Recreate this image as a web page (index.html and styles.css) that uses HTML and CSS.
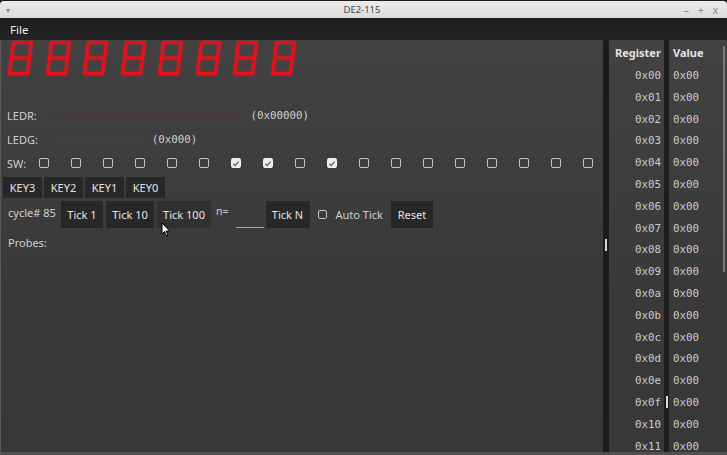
FILE: index.html
```html
<!DOCTYPE html>
<html>
<head>
<meta charset="utf-8">
<link rel="stylesheet" href="styles.css">
</head>
<body>
<div class="window">
  <div class="titlebar">
    <span class="tb-menu">▾</span>
    <span class="tb-title">DE2-115</span>
    <span class="tb-btns"><span>–</span><span>+</span><span>x</span></span>
  </div>
  <div class="menubar"><span class="menu-item">File</span></div>
  <div class="main">
    <div class="left">
      <div class="segs" id="segs"></div>
      <div class="row">
        <span class="label lbl-ledr">LEDR:</span>
        <span class="leds leds-red" id="ledr"></span>
        <span class="mono hexr">(0x00000)</span>
      </div>
      <div class="row">
        <span class="label lbl-ledg">LEDG:</span>
        <span class="leds leds-green" id="ledg"></span>
        <span class="mono hexg">(0x000)</span>
      </div>
      <div class="row sw-row">
        <span class="label lbl-sw">SW:</span>
        <div class="switches" id="switches"></div>
      </div>
      <div class="keys">
        <button class="btn key">KEY3</button>
        <button class="btn key">KEY2</button>
        <button class="btn key">KEY1</button>
        <button class="btn key">KEY0</button>
      </div>
      <div class="ticks">
        <span class="label cycle">cycle# 85</span>
        <button class="btn tick t1">Tick 1</button>
        <button class="btn tick t10">Tick 10</button>
        <button class="btn tick t100 hover">Tick 100</button>
        <span class="label neq">n=</span>
        <span class="nbox"></span>
        <button class="btn tick tn">Tick N</button>
        <span class="cb auto-cb"></span>
        <span class="label auto">Auto Tick</span>
        <button class="btn tick reset">Reset</button>
      </div>
      <div class="row probes"><span class="label">Probes:</span></div>
      <svg class="cursor" width="10" height="15" viewBox="0 0 10 15"><path d="M1 1 L1 12 L3.5 9.5 L5.5 14 L7 13.3 L5.1 9 L8.6 9 Z" fill="#fff" stroke="#000" stroke-width="1"/></svg>
    </div>
    <div class="splitter"><span class="handle"></span></div>
    <div class="regs">
      <div class="col col-reg" id="colreg"><div class="hdr">Register</div></div>
      <div class="col-div"><span class="handle2"></span></div>
      <div class="col col-val" id="colval"><div class="hdr">Value</div></div>
      <div class="scroll"><span class="sbar"></span></div>
    </div>
  </div>
</div>
<script>
  var segs = document.getElementById('segs');
  for (var i = 0; i < 8; i++) {
    segs.insertAdjacentHTML('beforeend',
      '<svg class="digit" width="27" height="36" viewBox="0 0 27 36">' +
      '<path d="M6.5 2.5 L24.5 2.5 L20.5 33.5 L2.5 33.5 Z M4.5 18 L22.5 18" fill="none" stroke="#e4101c" stroke-width="3" stroke-linejoin="round"/></svg>');
  }
  var r = document.getElementById('ledr');
  for (var i = 0; i < 18; i++) r.insertAdjacentHTML('beforeend', '<i></i>');
  var g = document.getElementById('ledg');
  for (var i = 0; i < 9; i++) g.insertAdjacentHTML('beforeend', '<i></i>');
  var sw = document.getElementById('switches');
  var on = {6:1, 7:1, 9:1};
  for (var i = 0; i < 18; i++) {
    sw.insertAdjacentHTML('beforeend', '<span class="swc"><span class="cb' + (on[i] ? ' checked' : '') + '">' +
      (on[i] ? '<svg width="9" height="9" viewBox="0 0 9 9"><path d="M1.5 4.8 L3.6 6.8 L7.6 2.4" fill="none" stroke="#6a6a6a" stroke-width="1.5"/></svg>' : '') +
      '</span></span>');
  }
  var cr = document.getElementById('colreg'), cv = document.getElementById('colval');
  for (var i = 0; i < 18; i++) {
    var h = i.toString(16); if (h.length < 2) h = '0' + h;
    cr.insertAdjacentHTML('beforeend', '<div class="cell">0x' + h + '</div>');
    cv.insertAdjacentHTML('beforeend', '<div class="cell">0x00</div>');
  }
</script>
</body>
</html>
```

FILE: styles.css
```css
html, body {
  margin: 0;
  padding: 0;
  background: #2a2a2a;
}
body {
  width: 727px;
  height: 455px;
  overflow: hidden;
  font-family: "Noto Sans", "Open Sans", sans-serif;
}
.window {
  width: 727px;
  height: 455px;
  display: flex;
  flex-direction: column;
  background: #1c1c1c;
}
.titlebar {
  height: 17px;
  margin-top: 1px;
  background: linear-gradient(#ececec, #dcdcdc);
  border-radius: 4px 4px 0 0;
  display: flex;
  align-items: center;
  position: relative;
  color: #5a5a5a;
  font-size: 9px;
}
.tb-menu {
  margin-left: 6px;
  font-size: 8px;
  color: #888;
}
.tb-title {
  flex: 1;
  text-align: center;
  color: #4a4a4a;
  font-size: 9.5px;
  margin-left: 30px;
}
.tb-btns {
  display: flex;
  gap: 9px;
  margin-right: 9px;
  color: #888;
  font-size: 10px;
}
.menubar {
  height: 22px;
  background: linear-gradient(#1e1e1e, #242424);
  display: flex;
  align-items: center;
}
.menu-item {
  margin-left: 10px;
  color: #ececec;
  font-size: 11.5px;
}
.main {
  flex: 1;
  display: flex;
  background: linear-gradient(#424242, #393939 60%, #383838);
  border-left: 1px solid #5a5a5a;
  border-bottom: 3px solid #505050;
  overflow: hidden;
}
.left {
  width: 602px;
  position: relative;
}
.label {
  color: #cfcfcf;
  font-size: 11px;
  white-space: nowrap;
}
.mono {
  font-family: "DejaVu Sans Mono", monospace;
  font-size: 10.8px;
  color: #cfcfcf;
}
.segs {
  height: 40px;
  display: flex;
  align-items: flex-start;
  padding-left: 6px;
  gap: 10.5px;
}
.digit {
  filter: drop-shadow(0 0 1.5px rgba(255, 20, 30, 0.6));
}
.row {
  height: 24px;
  display: flex;
  align-items: center;
}
.segs + .row {
  margin-top: 23px;
}
.lbl-ledr, .lbl-ledg, .lbl-sw {
  margin-left: 6px;
}
.lbl-ledr { width: 44px; }
.lbl-ledg { width: 46px; }
.leds {
  display: flex;
  gap: 1px;
}
.leds i {
  display: block;
  width: 9.7px;
  height: 2px;
}
.leds-red i { background: #4e3535; }
.leds-green i { background: #354a37; }
.leds-green i { width: 9.3px; }
.hexr { margin-left: 8px; }
.hexg { margin-left: 7px; }
.switches {
  display: flex;
  margin-left: 2px;
}
.swc {
  width: 32px;
  display: flex;
  justify-content: center;
}
.cb {
  display: inline-flex;
  align-items: center;
  justify-content: center;
  width: 8px;
  height: 8px;
  border: 1.5px solid #c2c2c2;
  border-radius: 2px;
}
.cb.checked {
  background: #ededed;
  border-color: #ededed;
}
.keys {
  display: flex;
  gap: 2px;
  margin-top: 2px;
  margin-left: 2px;
  height: 21px;
}
.btn {
  background: #272727;
  color: #e4e4e4;
  border: none;
  border-radius: 1px;
  font-family: "Noto Sans", "Open Sans", sans-serif;
  font-size: 11px;
  padding: 0;
  white-space: nowrap;
  flex: none;
}
.key { width: 39px; }
.ticks {
  display: flex;
  align-items: center;
  height: 27px;
  margin-top: 3px;
}
.tick {
  height: 27px;
}
.cycle {
  margin-left: 7px;
  width: 53px;
  margin-top: -5px;
}
.t1 { width: 42px; }
.t10 { width: 48px; margin-left: 3px; }
.t100 { width: 54px; margin-left: 3px; }
.hover { background: #303030; }
.neq {
  margin-left: 5px;
  margin-top: -7px;
  font-size: 10.5px;
}
.nbox {
  width: 28px;
  height: 1px;
  background: #a0a0a0;
  margin-left: 7px;
  margin-top: 25px;
}
.tn { width: 44px; margin-left: 2px; }
.auto-cb {
  margin-left: 8px;
  width: 7px;
  height: 7px;
}
.auto { margin-left: 9px; }
.reset { width: 42px; margin-left: 8px; }
.probes {
  margin-top: 2px;
  padding-left: 7px;
}
.cursor {
  position: absolute;
  left: 160px;
  top: 182px;
}
.splitter {
  width: 6px;
  background: #1b1b1b;
  position: relative;
}
.handle {
  position: absolute;
  left: 2px;
  top: 199px;
  width: 2px;
  height: 12px;
  background: #d8d8d8;
}
.regs {
  flex: 1;
  display: flex;
  padding-top: 2px;
  font-family: "DejaVu Sans Mono", monospace;
}
.col-reg {
  width: 55px;
  text-align: right;
}
.col-reg .cell { padding-right: 3px; }
.col-div {
  width: 5px;
  background: #1e1e1e;
  position: relative;
  margin-top: -2px;
}
.handle2 {
  position: absolute;
  left: 2px;
  top: 356px;
  width: 2px;
  height: 12px;
  background: #d8d8d8;
}
.col-val {
  width: 52px;
}
.col-val .cell, .col-val .hdr { padding-left: 4px; }
.hdr {
  height: 22px;
  line-height: 22px;
  font-family: "Noto Sans", "Open Sans", sans-serif;
  font-weight: bold;
  font-size: 11px;
  color: #e2e2e2;
  text-align: left;
  margin-bottom: 1px;
}
.cell {
  height: 21.8px;
  line-height: 21.8px;
  font-size: 10.8px;
  color: #cacaca;
}
.col-reg .hdr { padding-left: 6px; }
.scroll {
  flex: 1;
  position: relative;
}
.sbar {
  position: absolute;
  left: 2px;
  top: 4px;
  width: 2px;
  height: 226px;
  background: #7a7a7a;
}
```
